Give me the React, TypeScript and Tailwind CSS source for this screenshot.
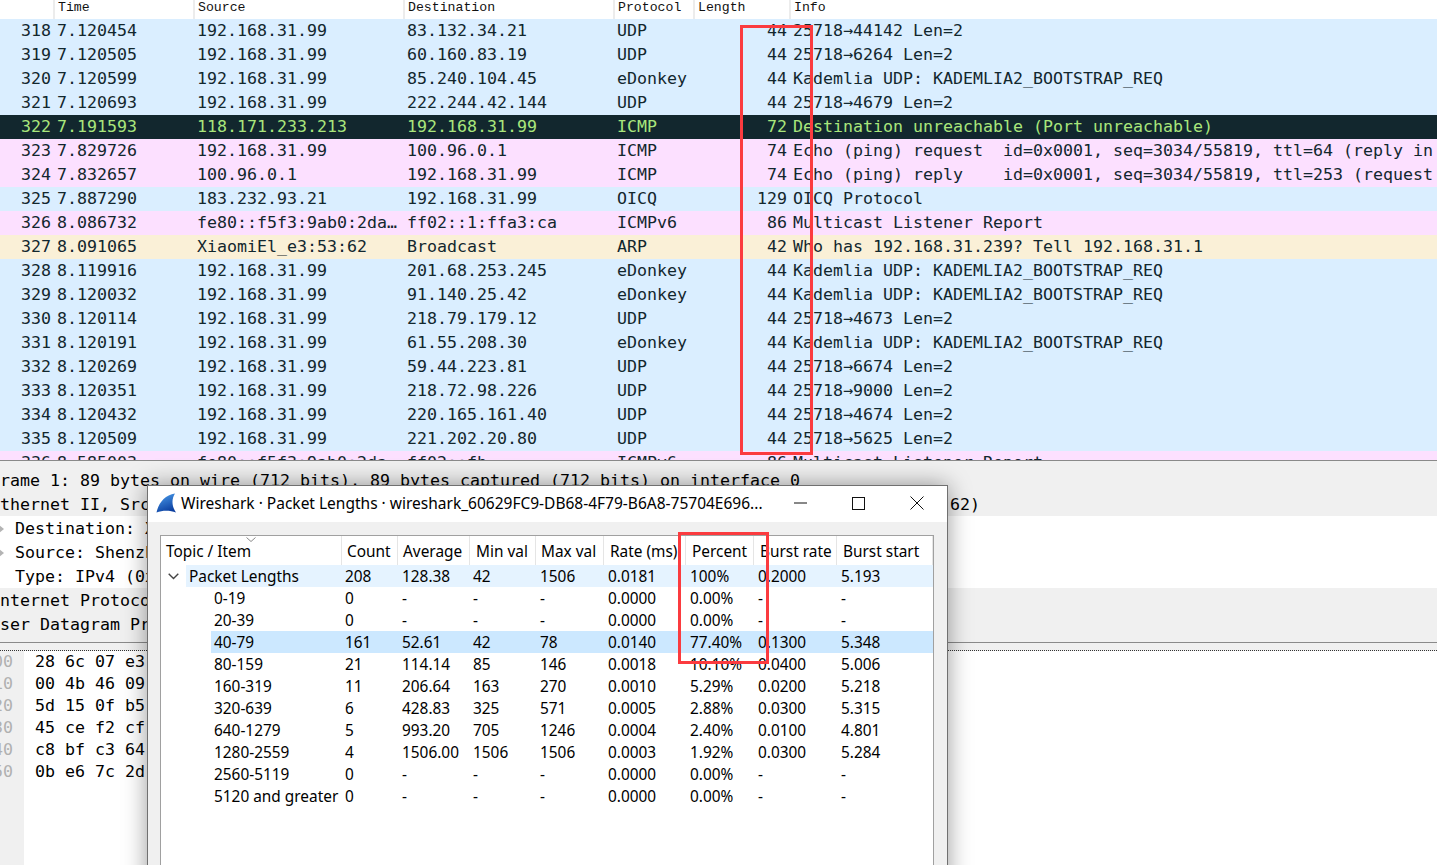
const U = "192.168.31.99";
const K = "Kademlia UDP: KADEMLIA2_BOOTSTRAP_REQ";
type P = [string, string, string, string, string, string, string, string];
const packets: P[] = [
  ["318","7.120454",U,"83.132.34.21","UDP","44","25718→44142 Len=2","b"],
  ["319","7.120505",U,"60.160.83.19","UDP","44","25718→6264 Len=2","b"],
  ["320","7.120599",U,"85.240.104.45","eDonkey","44",K,"b"],
  ["321","7.120693",U,"222.244.42.144","UDP","44","25718→4679 Len=2","b"],
  ["322","7.191593","118.171.233.213",U,"ICMP","72","Destination unreachable (Port unreachable)","d"],
  ["323","7.829726",U,"100.96.0.1","ICMP","74","Echo (ping) request  id=0x0001, seq=3034/55819, ttl=64 (reply in 324)","p"],
  ["324","7.832657","100.96.0.1",U,"ICMP","74","Echo (ping) reply    id=0x0001, seq=3034/55819, ttl=253 (request in 323)","p"],
  ["325","7.887290","183.232.93.21",U,"OICQ","129","OICQ Protocol","b"],
  ["326","8.086732","fe80::f5f3:9ab0:2da…","ff02::1:ffa3:ca","ICMPv6","86","Multicast Listener Report","p"],
  ["327","8.091065","XiaomiEl_e3:53:62","Broadcast","ARP","42","Who has 192.168.31.239? Tell 192.168.31.1","y"],
  ["328","8.119916",U,"201.68.253.245","eDonkey","44",K,"b"],
  ["329","8.120032",U,"91.140.25.42","eDonkey","44",K,"b"],
  ["330","8.120114",U,"218.79.179.12","UDP","44","25718→4673 Len=2","b"],
  ["331","8.120191",U,"61.55.208.30","eDonkey","44",K,"b"],
  ["332","8.120269",U,"59.44.223.81","UDP","44","25718→6674 Len=2","b"],
  ["333","8.120351",U,"218.72.98.226","UDP","44","25718→9000 Len=2","b"],
  ["334","8.120432",U,"220.165.161.40","UDP","44","25718→4674 Len=2","b"],
  ["335","8.120509",U,"221.202.20.80","UDP","44","25718→5625 Len=2","b"],
  ["336","8.585003","fe80::f5f3:9ab0:2da…","ff02::fb","ICMPv6","86","Multicast Listener Report","p"],
];
const rowTone: Record<string, string> = {
  b: "bg-[#daeeff] text-[#12272e]",
  d: "bg-[#12272e] text-[#a9e67c]",
  p: "bg-[#fce0ff] text-[#12272e]",
  y: "bg-[#faf0d7] text-[#12272e]",
};
const hex = [
  ["00", "28 6c 07 e3"],
  ["10", "00 4b 46 09"],
  ["20", "5d 15 0f b5"],
  ["30", "45 ce f2 cf"],
  ["40", "c8 bf c3 64"],
  ["50", "0b e6 7c 2d"],
];
const headers: [string, string][] = [
  ["Time", "w-[140px]"],
  ["Source", "w-[210px]"],
  ["Destination", "w-[210px]"],
  ["Protocol", "w-[80px]"],
  ["Length", "w-[96px]"],
  ["Info", "flex-1"],
];
const colW = ["w-[56px]","w-[72px]","w-[66px]","w-[68px]","w-[82px]","w-[68px]","w-[83px]","w-[96px]"];
const headPad = ["pl-[5px]","pl-[5px]","pl-[6px]","pl-[5px]","pl-[6px]","pl-[6px]","pl-[6px]","pl-[6px]"];
const cellPad = ["pl-[3px]","pl-[4px]","pl-[3px]","pl-[4px]","pl-[4px]","pl-[4px]","pl-[4px]","pl-[4px]"];
const statHead = ["Count","Average","Min val","Max val","Rate (ms)","Percent","Burst rate","Burst start"];
const stats: string[][] = [
  ["0-19","0","-","-","-","0.0000","0.00%","-","-"],
  ["20-39","0","-","-","-","0.0000","0.00%","-","-"],
  ["40-79","161","52.61","42","78","0.0140","77.40%","0.1300","5.348"],
  ["80-159","21","114.14","85","146","0.0018","10.10%","0.0400","5.006"],
  ["160-319","11","206.64","163","270","0.0010","5.29%","0.0200","5.218"],
  ["320-639","6","428.83","325","571","0.0005","2.88%","0.0300","5.315"],
  ["640-1279","5","993.20","705","1246","0.0004","2.40%","0.0100","4.801"],
  ["1280-2559","4","1506.00","1506","1506","0.0003","1.92%","0.0300","5.284"],
  ["2560-5119","0","-","-","-","0.0000","0.00%","-","-"],
  ["5120 and greater","0","-","-","-","0.0000","0.00%","-","-"],
];

function Cells({ values }: { values: string[] }) {
  return (
    <>
      {values.map((v, i) => (
        <div key={i} className={`${colW[i]} ${cellPad[i]} shrink-0 whitespace-nowrap`}>{v}</div>
      ))}
    </>
  );
}

function Arrow() {
  return (
    <svg width="15" height="8" viewBox="0 0 15 8" className="shrink-0">
      <path d="M-1 0L4 4L-1 8Z" fill="#b4b4b4" />
    </svg>
  );
}

function Dialog() {
  return (
    <div className="absolute left-[147px] top-[485px] w-[801px] h-[420px] border border-[#707070] bg-[#f0f0f0] shadow-[0_0_22px_rgba(0,0,0,0.4)] text-black font-['Noto_Sans',sans-serif] text-[15.4px]">
      <div className="h-[36px] bg-white flex items-center pb-[2px]">
        <svg width="20" height="20" viewBox="0 0 20 20" className="ml-[8px] mr-[5px]">
          <defs>
            <linearGradient id="fin" x1="0.2" y1="0" x2="0.6" y2="1">
              <stop offset="0" stopColor="#4a9bea" />
              <stop offset="1" stopColor="#0a3d9e" />
            </linearGradient>
          </defs>
          <path d="M0.5 19.5C2.5 10 9 2 19 0.5C15.5 6 15.5 13 20 19.5C14 17 6.5 17 0.5 19.5Z" fill="url(#fin)" />
        </svg>
        <div className="whitespace-nowrap text-[15.5px] w-[600px] pt-[2px]">Wireshark · Packet Lengths · wireshark_60629FC9-DB68-4F79-B6A8-75704E696...</div>
        <svg width="13" height="2" viewBox="0 0 13 2" className="ml-[13px]"><path d="M0 1H13" stroke="#111" /></svg>
        <svg width="13" height="13" viewBox="0 0 13 13" className="ml-[45px]"><rect x="0.5" y="0.5" width="12" height="12" fill="none" stroke="#111" /></svg>
        <svg width="14" height="14" viewBox="0 0 14 14" className="ml-[45px]"><path d="M0.5 0.5L13.5 13.5M13.5 0.5L0.5 13.5" stroke="#111" /></svg>
      </div>
      <div className="mt-[13px] ml-[12px] w-[774px] h-[400px] border border-[#a0a0a0] bg-white">
        <div className="flex h-[29px] items-center">
          <div className="relative w-[181px] h-full flex items-center pl-[5px] pt-[2px] border-r border-[#e5e5e5]">
            Topic / Item
            <svg width="10" height="5" viewBox="0 0 10 5" className="absolute left-[85px] top-[1px]"><path d="M0.5 0.5L5 4.5L9.5 0.5" fill="none" stroke="#8a8a8a" /></svg>
          </div>
          {statHead.map((h, i) => (
            <div key={h} className={`${colW[i]} ${headPad[i]} h-full flex items-center pt-[2px] border-r border-[#e5e5e5] whitespace-nowrap shrink-0`}>{h}</div>
          ))}
        </div>
        <div className="flex h-[22px] items-center">
          <div className="w-[25px] h-full flex items-center pl-[7px]">
            <svg width="11" height="7" viewBox="0 0 11 7"><path d="M0.7 0.7L5.5 5.5L10.3 0.7" fill="none" stroke="#444" strokeWidth="1.4" /></svg>
          </div>
          <div className="flex-1 h-full flex items-center pt-[2px] bg-[#e5f3ff]">
            <div className="w-[156px] pl-[3px]">Packet Lengths</div>
            <Cells values={["208","128.38","42","1506","0.0181","100%","0.2000","5.193"]} />
          </div>
        </div>
        {stats.map((r) => (
          <div key={r[0]} className="flex h-[22px] items-center pl-[50px]">
            <div className={`flex-1 h-full flex items-center pt-[2px] ${r[0] === "40-79" ? "bg-[#cce8ff]" : ""}`}>
              <div className="w-[131px] pl-[3px] whitespace-nowrap">{r[0]}</div>
              <Cells values={r.slice(1)} />
            </div>
          </div>
        ))}
      </div>
    </div>
  );
}

export default function App() {
  return (
    <div className="relative w-[1437px] h-[865px] overflow-hidden bg-white flex flex-col font-['DejaVu_Sans_Mono',monospace] text-[16.62px] text-[#12272e]">
      <div className="h-[19px] flex shrink-0 bg-white font-['Liberation_Mono',monospace] text-[13.2px] leading-[14px] text-[#111]">
        <div className="w-[53px]" />
        {headers.map(([h, w]) => (
          <div key={h} className={`${w} h-full border-l-2 border-[#ececec] pl-[3px] pt-[1px]`}>{h}</div>
        ))}
      </div>
      <div className="h-[441px] shrink-0 overflow-hidden">
        {packets.map((p) => (
          <div key={p[0]} className={`flex h-[24px] items-center whitespace-pre ${rowTone[p[7]]}`}>
            <div className="w-[51px] text-right shrink-0">{p[0]}</div>
            <div className="w-[146px] pl-[6px] shrink-0">{p[1]}</div>
            <div className="w-[210px] shrink-0">{p[2]}</div>
            <div className="w-[210px] shrink-0">{p[3]}</div>
            <div className="w-[120px] shrink-0">{p[4]}</div>
            <div className="w-[50px] text-right shrink-0">{p[5]}</div>
            <div className="pl-[6px]">{p[6]}</div>
          </div>
        ))}
      </div>
      <div className="h-[8px] shrink-0 bg-[#f0f0f0] border-t border-[#8a8a8a]" />
      <div className="h-[174px] shrink-0 overflow-hidden text-black whitespace-pre">
        <div className="h-[24px] pt-[2px] flex items-center bg-[#f0f0f0]"><span className="-ml-[10px]">Frame 1: 89 bytes on wire (712 bits), 89 bytes captured (712 bits) on interface 0</span></div>
        <div className="h-[24px] pt-[2px] flex items-center bg-[#f0f0f0]"><span className="-ml-[10px]">Ethernet II, Src: Shenzhen_b4:3c:11 (28:6c:07:b4:3c:11), Dst: XiaomiEl_e3:53:62 (28:6c:07:e3:53:62)</span></div>
        <div className="h-[24px] pt-[2px] flex items-center"><Arrow />Destination: XiaomiEl_e3:53:62</div>
        <div className="h-[24px] pt-[2px] flex items-center"><Arrow />Source: Shenzhen_b4:3c:11</div>
        <div className="h-[24px] pt-[2px] flex items-center pl-[15px]">Type: IPv4 (0x0800)</div>
        <div className="h-[24px] pt-[2px] flex items-center bg-[#f0f0f0]"><span className="-ml-[10px]">Internet Protocol Version 4</span></div>
        <div className="h-[24px] pt-[2px] flex items-center bg-[#f0f0f0]"><span className="-ml-[10px]">User Datagram Protocol</span></div>
        <div className="h-[24px] bg-[#f0f0f0]" />
      </div>
      <div className="h-[9px] shrink-0 bg-[#f0f0f0] border-t border-[#8a8a8a] border-b border-b-[#333] [border-bottom-style:dotted]" />
      <div className="flex-1 flex">
        <div className="w-[24px] shrink-0 bg-[#f0f0f0] overflow-hidden text-[#b0b0b0]">
          {hex.map(([o]) => (
            <div key={o} className="h-[22px] leading-[22px] -ml-[27px] whitespace-nowrap">00{o}</div>
          ))}
        </div>
        <div className="pl-[11px] text-black">
          {hex.map(([o, h]) => (
            <div key={o} className="h-[22px] leading-[22px] whitespace-pre">{h}</div>
          ))}
        </div>
      </div>
      <Dialog />
      <div className="absolute left-[740px] top-[25px] w-[73px] h-[430px] border-[3px] border-[#fb3b3f]" />
      <div className="absolute left-[678px] top-[532px] w-[91px] h-[132px] border-[3px] border-[#fb3b3f]" />
    </div>
  );
}
